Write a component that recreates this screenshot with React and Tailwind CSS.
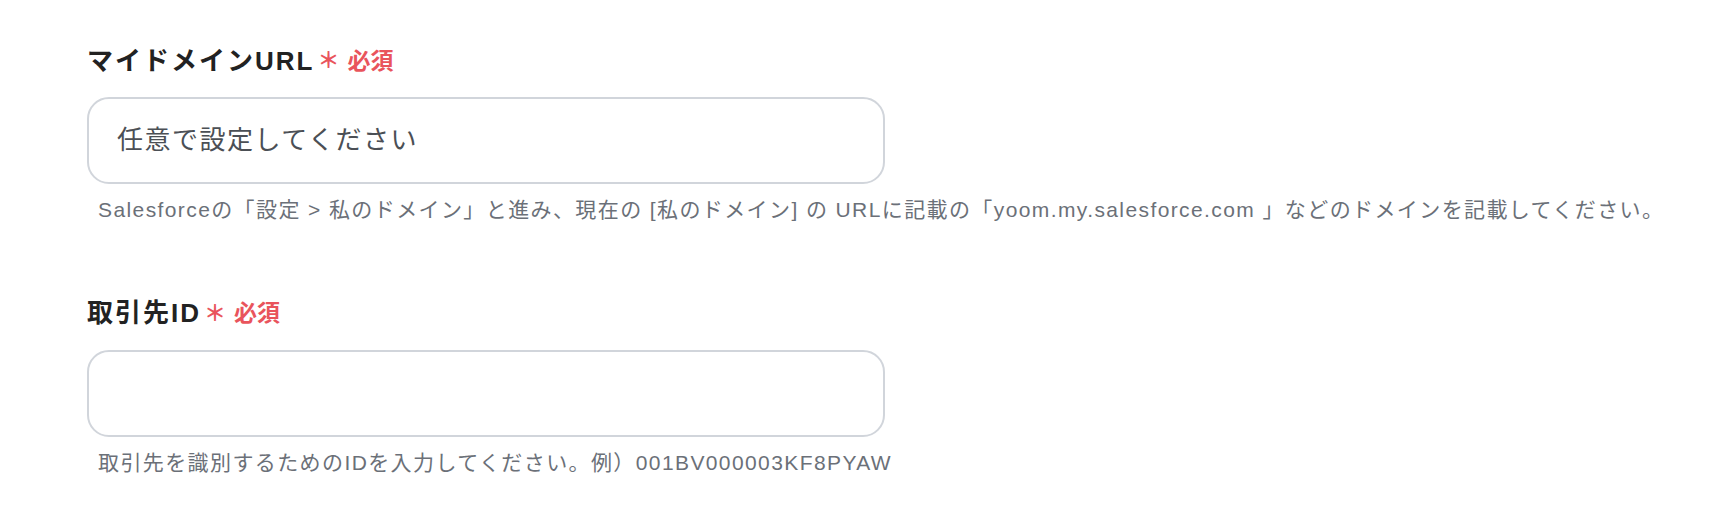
import React from 'react';

const FONT = { fontFamily: '"Liberation Sans", "Noto Sans CJK JP", sans-serif' };

function Field({ label, value, help }) {
  return (
    <div className="flex flex-col">
      <div className="flex items-center h-[40px]">
        <span className="text-[26px] font-bold text-[#222222] tracking-[2px]">{label}</span>
        <span className="ml-[3px] flex items-center gap-[8px] text-[#e9545c] font-bold">
          <span className="text-[22px] leading-none">＊</span>
          <span className="text-[23px]">必須</span>
        </span>
      </div>
      <div className="mt-[16px] w-[798px] h-[87px] rounded-[22px] border-2 border-[#d1d5db] bg-white flex items-center px-[28px]">
        <span className="text-[26px] text-[#4b4f55] tracking-[1.5px]">{value}</span>
      </div>
      <p className="mt-[10px] pl-[11px] text-[21px] text-[#6b7078] tracking-[1.4px]">{help}</p>
    </div>
  );
}

export default function App() {
  return (
    <div className="w-[1730px] h-[518px] bg-white pl-[87px] pt-[41px]" style={FONT}>
      <Field
        label="マイドメインURL"
        value="任意で設定してください"
        help="Salesforceの「設定 > 私のドメイン」と進み、現在の [私のドメイン] の URLに記載の「yoom.my.salesforce.com 」などのドメインを記載してください。"
      />
      <div className="h-[68px]" />
      <Field
        label="取引先ID"
        value=""
        help="取引先を識別するためのIDを入力してください。例）001BV000003KF8PYAW"
      />
    </div>
  );
}
